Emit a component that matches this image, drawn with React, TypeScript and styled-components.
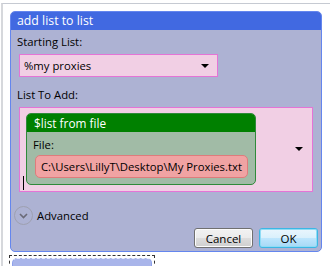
import React from "react";
import styled, { createGlobalStyle } from "styled-components";

const GlobalStyle = createGlobalStyle`
  html, body {
    margin: 0;
    padding: 0;
    background: #ffffff;
  }
  body {
    font-family: "Open Sans", "Liberation Sans", sans-serif;
    font-size: 11.3px;
    color: #000;
  }
`;

const Canvas = styled.div`
  margin: 3px 0 0 1px;
  height: 263px;
  border-top: 1px solid #c6cad2;
  border-left: 2px solid #d6d8dc;
  overflow: hidden;
  padding: 7px 0 0 7px;
  box-sizing: border-box;
  display: flex;
  flex-direction: column;
  gap: 3px;
`;

const Node = styled.div`
  flex-shrink: 0;
  width: 312px;
  height: 241px;
  box-sizing: border-box;
  border: 1px solid #6486ee;
  border-radius: 5px;
  background: #adb2d3;
  display: flex;
  flex-direction: column;
  overflow: hidden;
`;

const TitleBar = styled.div`
  height: 18px;
  background: #4169e1;
  color: #fff;
  font-size: 12.3px;
  line-height: 18px;
  padding-left: 6px;
`;

const Body = styled.div`
  flex: 1;
  display: flex;
  flex-direction: column;
  padding: 4px 3px 3px 5px;
`;

const Label = styled.div<{ $top?: number }>`
  height: 16px;
  line-height: 16px;
  margin-top: ${({ $top }) => $top ?? 0}px;
  padding-left: 1px;
`;

const Combo = styled.div`
  margin: 4px 0 0 3px;
  width: 199px;
  height: 23px;
  box-sizing: border-box;
  background: #f1cfe4;
  border: 1px solid #e474d6;
  display: flex;
  align-items: center;
  justify-content: space-between;
  padding: 0 8px 0 4px;
`;

const Arrow = styled.span`
  width: 0;
  height: 0;
  border-left: 4px solid transparent;
  border-right: 4px solid transparent;
  border-top: 4px solid #000;
`;

const BigBox = styled.div`
  flex-shrink: 0;
  margin: 4px 0 0 3px;
  width: 294px;
  height: 85px;
  box-sizing: border-box;
  background: #f1cfe4;
  border: 1px solid #e474d6;
  display: flex;
  align-items: center;
  padding: 5px 9px 6px 3px;
`;

const Caret = styled.span`
  align-self: flex-end;
  width: 1px;
  height: 14px;
  background: #000;
  margin: 0 2px -5px 0;
`;

const GreenBox = styled.div`
  align-self: flex-start;
  width: 230px;
  height: 72px;
  box-sizing: border-box;
  border: 1px solid #2f8a3a;
  border-radius: 5px;
  background: #a1bba6;
  overflow: hidden;
  display: flex;
  flex-direction: column;
`;

const GreenHeader = styled.div`
  height: 18px;
  line-height: 18px;
  background: #008000;
  color: #fff;
  font-size: 11.8px;
  padding-left: 7px;
`;

const GreenBody = styled.div`
  display: flex;
  flex-direction: column;
  padding: 5px 7px 0 5px;
`;

const FileBox = styled.div`
  margin: 2px 0 0 3px;
  height: 23px;
  box-sizing: border-box;
  background: #f0a3a3;
  border: 1px solid #de7c7c;
  border-radius: 5px;
  line-height: 21px;
  padding-left: 5px;
  white-space: nowrap;
`;

const Spacer = styled.div`
  flex: 1;
`;

const AdvancedRow = styled.div`
  margin-top: 14px;
  display: flex;
  align-items: center;
  gap: 4px;
  margin-left: -2px;
`;

const Expander = styled.span`
  width: 17px;
  height: 17px;
  border: 1px solid #9ea0b0;
  border-radius: 50%;
  display: flex;
  align-items: center;
  justify-content: center;
`;

const Buttons = styled.div`
  margin-top: auto;
  display: flex;
  justify-content: flex-end;
  gap: 6px;
`;

const Btn = styled.button<{ $focus?: boolean }>`
  width: 59px;
  height: 20px;
  box-sizing: border-box;
  font-family: "Open Sans", "Liberation Sans", sans-serif;
  font-size: 11.5px;
  color: #000;
  padding: 0;
  border-radius: 3px;
  border: 1px solid ${({ $focus }) => ($focus ? "#3cb6e4" : "#707070")};
  background: ${({ $focus }) =>
    $focus
      ? "linear-gradient(#eaf6fd 0%, #d9f0fc 50%, #bee6fd 51%, #a7d9f5 100%)"
      : "linear-gradient(#f2f2f2 0%, #ebebeb 50%, #dddddd 51%, #cfcfcf 100%)"};
  box-shadow: ${({ $focus }) => ($focus ? "inset 0 0 0 1px #8fdcf5" : "inset 0 0 0 1px #fcfcfc")};
`;

const GhostNode = styled.div`
  flex-shrink: 0;
  margin-left: -1px;
  width: 146px;
  height: 20px;
  box-sizing: border-box;
  border: 1px dashed #333;
  padding: 2px;
`;

const GhostInner = styled.div`
  height: 20px;
  border-radius: 5px;
  background: #a9b5ea;
  border: 1px solid #8ea2ec;
  border-top: 1px dashed #e6ecff;
`;

export default function App() {
  return (
    <>
      <GlobalStyle />
      <Canvas>
        <Node>
          <TitleBar>add list to list</TitleBar>
          <Body>
            <Label>Starting List:</Label>
            <Combo>
              <span>%my proxies</span>
              <Arrow />
            </Combo>
            <Label $top={10}>List To Add:</Label>
            <BigBox>
              <Caret />
              <GreenBox>
                <GreenHeader>$list from file</GreenHeader>
                <GreenBody>
                  <Label>File:</Label>
                  <FileBox>C:\Users\LillyT\Desktop\My Proxies.txt</FileBox>
                </GreenBody>
              </GreenBox>
              <Spacer />
              <Arrow />
            </BigBox>
            <AdvancedRow>
              <Expander>
                <svg width="9" height="6" viewBox="0 0 9 6">
                  <path d="M1 1 L4.5 4.5 L8 1" fill="none" stroke="#6a6a78" strokeWidth="1.6" />
                </svg>
              </Expander>
              <span>Advanced</span>
            </AdvancedRow>
            <Buttons>
              <Btn>Cancel</Btn>
              <Btn $focus>OK</Btn>
            </Buttons>
          </Body>
        </Node>
        <GhostNode>
          <GhostInner />
        </GhostNode>
      </Canvas>
    </>
  );
}
